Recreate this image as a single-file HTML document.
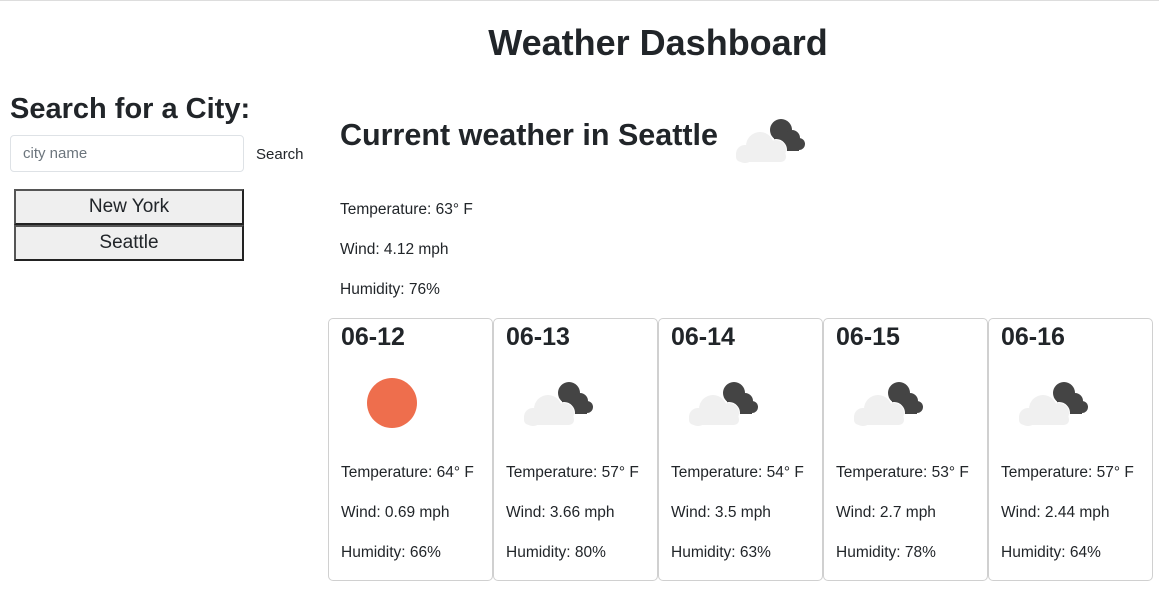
<!DOCTYPE html>
<html><head><style>
body{margin:0;width:1159px;height:589px;background:#fff;font-family:"Liberation Sans",sans-serif;color:#212529;position:relative;overflow:hidden;border-top:1px solid #ddd;box-sizing:border-box}
.a{position:absolute;white-space:nowrap}
h1{position:absolute;margin:0;font-weight:bold;white-space:nowrap}
.inp{position:absolute;left:10px;top:134px;width:234px;height:37px;border:1px solid #dee2e6;border-radius:4px;box-sizing:border-box;font-size:15px;color:#6c757d;padding:9px 12px}
.btn{position:absolute;left:14px;width:230px;height:36px;box-sizing:border-box;border:2px solid #222;border-top-color:#555;border-left-color:#555;background:#efefef;text-align:center;font-size:19px;line-height:32px}
.card{position:absolute;top:317px;width:165px;height:263px;border:1px solid #d0d0d0;border-radius:5px;box-sizing:border-box}
.card .d{position:absolute;left:12px;top:4px;font-size:25px;font-weight:bold}
.card .t{position:absolute;left:12px;font-size:15.5px}
.card svg{position:absolute;left:28px;top:60px}
.b{font-size:15.5px}
</style></head><body>
<h1 style="left:0;width:1316px;text-align:center;top:21px;font-size:36px">Weather Dashboard</h1>
<h1 style="left:10px;top:92px;font-size:29px">Search for a City:</h1>
<div class="inp">city name</div>
<div class="a" style="left:256px;top:145px;font-size:15px">Search</div>
<div class="btn" style="top:188px">New York</div>
<div class="btn" style="top:224px">Seattle</div>
<h1 style="left:340px;top:117px;font-size:30.5px">Current weather in Seattle</h1>
<svg class="a" style="left:734px;top:115px" width="74" height="48" viewBox="0 0 74 48"><g fill="#444"><circle cx="47" cy="14" r="11"/><circle cx="58" cy="22" r="8"/><circle cx="65" cy="28" r="6"/><rect x="40" y="18" width="25" height="17"/></g><g fill="#f0f0f0" stroke="#fff" stroke-width="2"><circle cx="26" cy="30" r="14"/><circle cx="42" cy="34" r="10"/><circle cx="11" cy="38" r="9"/><rect x="2" y="35" width="50" height="11" rx="5"/></g><g fill="#f0f0f0"><circle cx="26" cy="30" r="14"/><circle cx="42" cy="34" r="10"/><circle cx="11" cy="38" r="9"/><rect x="2" y="35" width="50" height="11" rx="5"/></g></svg>
<div class="a b" style="left:340px;top:200px">Temperature: 63° F</div>
<div class="a b" style="left:340px;top:240px">Wind: 4.12 mph</div>
<div class="a b" style="left:340px;top:280px">Humidity: 76%</div>

<div class="card" style="left:328px"><div class="d">06-12</div><svg width="60" height="60" style="left:32px;top:54px"><circle cx="31" cy="30" r="25" fill="#ee6e4d"/></svg><div class="t" style="top:145px">Temperature: 64° F</div><div class="t" style="top:185px">Wind: 0.69 mph</div><div class="t" style="top:225px">Humidity: 66%</div></div>
<div class="card" style="left:493px"><div class="d">06-13</div>ICON<div class="t" style="top:145px">Temperature: 57° F</div><div class="t" style="top:185px">Wind: 3.66 mph</div><div class="t" style="top:225px">Humidity: 80%</div></div>
<div class="card" style="left:658px"><div class="d">06-14</div>ICON<div class="t" style="top:145px">Temperature: 54° F</div><div class="t" style="top:185px">Wind: 3.5 mph</div><div class="t" style="top:225px">Humidity: 63%</div></div>
<div class="card" style="left:823px"><div class="d">06-15</div>ICON<div class="t" style="top:145px">Temperature: 53° F</div><div class="t" style="top:185px">Wind: 2.7 mph</div><div class="t" style="top:225px">Humidity: 78%</div></div>
<div class="card" style="left:988px"><div class="d">06-16</div>ICON<div class="t" style="top:145px">Temperature: 57° F</div><div class="t" style="top:185px">Wind: 2.44 mph</div><div class="t" style="top:225px">Humidity: 64%</div></div>
<script>
var ic='<svg width="74" height="48" viewBox="0 0 74 48"><g fill="#444"><circle cx="47" cy="14" r="11"/><circle cx="58" cy="22" r="8"/><circle cx="65" cy="28" r="6"/><rect x="40" y="18" width="25" height="17"/></g><g fill="#f0f0f0" stroke="#fff" stroke-width="2"><circle cx="26" cy="30" r="14"/><circle cx="42" cy="34" r="10"/><circle cx="11" cy="38" r="9"/><rect x="2" y="35" width="50" height="11" rx="5"/></g><g fill="#f0f0f0"><circle cx="26" cy="30" r="14"/><circle cx="42" cy="34" r="10"/><circle cx="11" cy="38" r="9"/><rect x="2" y="35" width="50" height="11" rx="5"/></g></svg>';
document.querySelectorAll('.card').forEach(function(c){c.innerHTML=c.innerHTML.replace('ICON',ic)});
</script>
</body></html>
